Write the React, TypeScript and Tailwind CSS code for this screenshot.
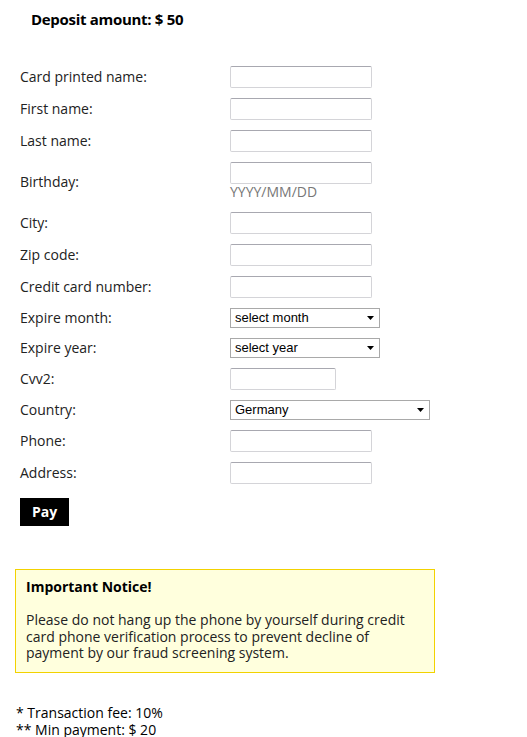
import type { ReactNode } from 'react'

const font = { fontFamily: '"Open Sans", "DejaVu Sans", sans-serif' }

function Row({ label, children, tall }: { label: string; children: ReactNode; tall?: boolean }) {
  return (
    <div className={`flex items-center ${tall ? 'h-[40px]' : 'h-[22px]'}`}>
      <div className="w-[210px] text-[14px] text-[#222]">{label}</div>
      <div>{children}</div>
    </div>
  )
}

function TextInput({ w = 'w-[142px]' }: { w?: string }) {
  return <input className={`${w} h-[22px] border border-[#d4d4d8] border-t-[#a8a8b0] rounded-[2px] bg-white`} />
}

function Select({ value, w }: { value: string; w: string }) {
  return (
    <div
      className={`${w} h-[20px] border border-[#a9a9a9] bg-white flex items-center justify-between pl-[4px] pr-[5px] text-[13px] text-black`}
      style={{ fontFamily: '"Liberation Sans", Arial, sans-serif' }}
    >
      <span>{value}</span>
      <svg width="7" height="4" viewBox="0 0 7 4"><path d="M0 0h7L3.5 4z" fill="#000" /></svg>
    </div>
  )
}

export default function App() {
  return (
    <div className="bg-white min-h-screen w-[527px] text-[#111]" style={font}>
      <div className="pl-[31px] pt-[8px] text-[15px] font-bold text-black tracking-[-0.3px]">Deposit amount: $ 50</div>

      <div className="pl-[20px] pt-[35px] flex flex-col">
        <div className="flex flex-col gap-[10px]">
          <Row label="Card printed name:"><TextInput /></Row>
          <Row label="First name:"><TextInput /></Row>
          <Row label="Last name:"><TextInput /></Row>
          <Row label="Birthday:" tall>
            <div className="flex flex-col">
              <TextInput />
              <span className="text-[14px] text-[#777] leading-[18px] -mt-[1px]">YYYY/MM/DD</span>
            </div>
          </Row>
          <Row label="City:"><TextInput /></Row>
          <Row label="Zip code:"><TextInput /></Row>
          <Row label="Credit card number:"><TextInput /></Row>
        </div>
        <div className="flex flex-col gap-[10px] mt-[10px]">
          <div className="flex items-center h-[20px]">
            <div className="w-[210px] text-[14px] text-[#222]">Expire month:</div>
            <Select value="select month" w="w-[150px]" />
          </div>
          <div className="flex items-center h-[20px]">
            <div className="w-[210px] text-[14px] text-[#222]">Expire year:</div>
            <Select value="select year" w="w-[150px]" />
          </div>
          <Row label="Cvv2:"><TextInput w="w-[106px]" /></Row>
          <div className="flex items-center h-[20px]">
            <div className="w-[210px] text-[14px] text-[#222]">Country:</div>
            <Select value="Germany" w="w-[200px]" />
          </div>
          <Row label="Phone:"><TextInput /></Row>
          <Row label="Address:"><TextInput /></Row>
        </div>

        <button className="mt-[14px] w-[49px] h-[28px] bg-black text-white font-bold text-[14px] self-start">Pay</button>
      </div>

      <div className="ml-[15px] mt-[43px] w-[420px] h-[104px] bg-[#ffffdd] border border-[#f2d200] px-[10px] pt-[9px] text-[14px] text-[#222] leading-[16.5px]">
        <div className="font-bold text-black">Important Notice!</div>
        <div className="mt-[17px]">
          Please do not hang up the phone by yourself during credit card phone verification process to prevent decline of payment by our fraud screening system.
        </div>
      </div>

      <div className="pl-[16px] mt-[31px] text-[14px] leading-[17px] text-black">
        <div>* Transaction fee: 10%</div>
        <div>** Min payment: $ 20</div>
      </div>
    </div>
  )
}
